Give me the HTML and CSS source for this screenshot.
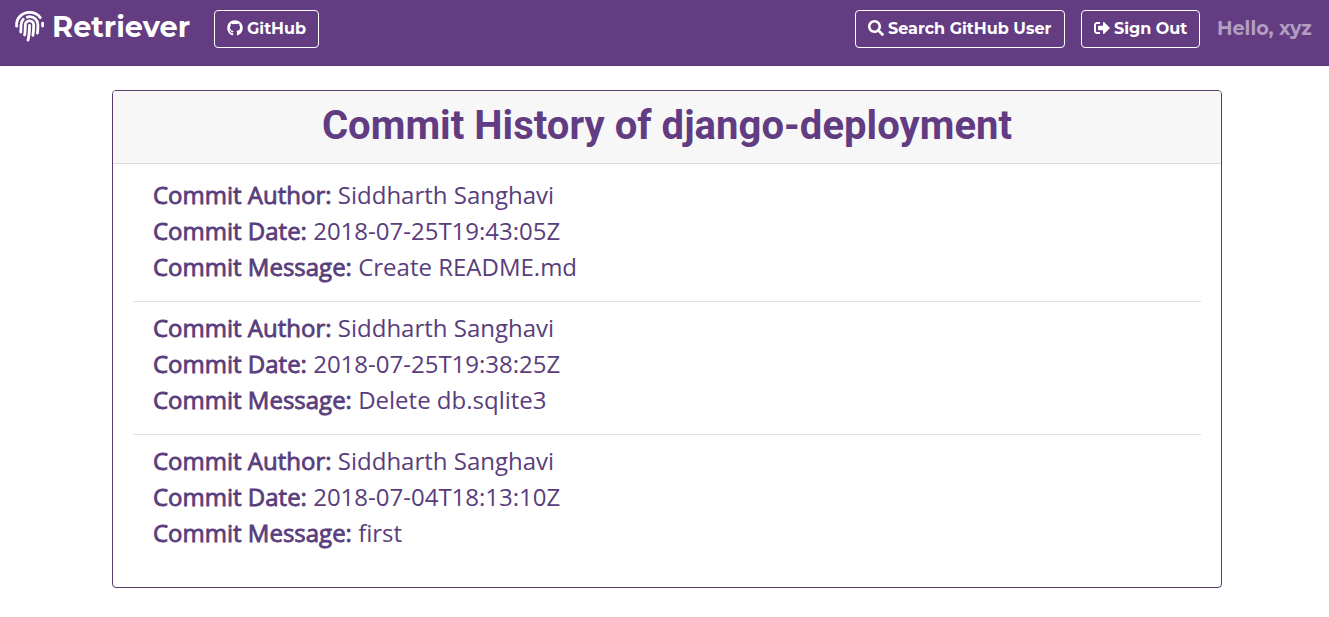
FILE: index.html
```html
<!DOCTYPE html>
<html lang="en">
<head>
<meta charset="utf-8">
<title>Retriever</title>
<link rel="stylesheet" href="styles.css">
</head>
<body>
<nav class="navbar">
  <a class="brand"><svg class="brand-icon" viewBox="0 0 30 31" aria-hidden="true"><g fill="none" stroke="currentColor" stroke-width="2.8" stroke-linecap="round"><path d="M1.6 15.2v-1.5C1.6 6.6 7.500 1.400 14.500 1.400c4.600 0 8.500 2 10.800 5.200M27.600 12.200v2.800"/><path d="M5.700 21c.3-2 .3-4 .3-7 0-2.300.9-4.200 2.300-5.700M12.200 6.100c.8-.3 1.600-.4 2.500-.4 4.600 0 8.200 3.400 8.200 8 0 3 0 5.500-.5 8.300"/><path d="M9.600 24c.7-3 .7-6.500.7-10 0-2.300 1.900-4.100 4.200-4.100s4.200 1.800 4.200 4.100c0 4-.2 7-.8 10.300"/><path d="M14.500 14.300c0 5.500-.2 10-1.500 14.800"/></g></svg><span class="brand-name">Retriever</span></a>
  <a class="btn github"><svg class="icon" viewBox="0 0 496 512" aria-hidden="true"><path fill="currentColor" d="M165.900 397.400c0 2-2.300 3.600-5.200 3.600-3.300.3-5.600-1.300-5.600-3.600 0-2 2.300-3.600 5.200-3.600 3-.3 5.600 1.300 5.600 3.600zM244.800 8C106.100 8 0 113.300 0 252c0 110.900 69.800 205.800 169.500 239.200 12.800 2.300 17.300-5.600 17.300-12.100 0-6.200-.3-40.400-.3-61.400 0 0-70 15-84.700-29.800 0 0-11.400-29.100-27.800-36.600 0 0-22.900-15.700 1.600-15.400 0 0 24.900 2 38.600 25.800 21.900 38.600 58.600 27.500 72.900 20.900 2.300-16 8.800-27.100 16-33.700-55.900-6.200-112.300-14.300-112.300-110.500 0-27.500 7.600-41.300 23.600-58.900-2.600-6.500-11.100-33.300 2.600-67.900 20.900-6.500 69 27 69 27 20-5.600 41.500-8.500 62.800-8.500s42.800 2.900 62.800 8.500c0 0 48.100-33.600 69-27 13.700 34.700 5.200 61.400 2.600 67.900 16 17.700 25.800 31.500 25.800 58.900 0 96.500-58.900 104.200-114.800 110.500 9.200 7.900 17 22.900 17 46.400 0 33.700-.3 75.400-.3 83.600 0 6.500 4.600 14.400 17.300 12.100C428.200 457.800 496 362.900 496 252 496 113.300 383.500 8 244.800 8z"/></svg><span>GitHub</span></a>
  <div class="nav-right">
    <a class="btn search"><svg class="icon" viewBox="0 0 512 512" aria-hidden="true"><path fill="currentColor" d="M505 442.700L405.300 343c-4.500-4.500-10.600-7-17-7H372c27.600-35.300 44-79.700 44-128C416 93.100 322.900 0 208 0S0 93.100 0 208s93.100 208 208 208c48.300 0 92.700-16.400 128-44v16.300c0 6.400 2.500 12.500 7 17l99.700 99.700c9.400 9.400 24.600 9.400 33.900 0l28.300-28.300c9.400-9.400 9.400-24.600.1-34zM208 336c-70.700 0-128-57.200-128-128 0-70.700 57.200-128 128-128 70.700 0 128 57.200 128 128 0 70.700-57.200 128-128 128z"/></svg><span>Search GitHub User</span></a>
    <a class="btn signout"><svg class="icon" viewBox="0 0 512 512" aria-hidden="true"><path fill="currentColor" d="M497 273L329 441c-15 15-41 4.500-41-17v-96H152c-13.300 0-24-10.700-24-24v-96c0-13.300 10.700-24 24-24h136V88c0-21.400 25.900-32 41-17l168 168c9.300 9.400 9.300 24.600 0 34zM192 436v-40c0-6.600-5.400-12-12-12H96c-17.700 0-32-14.300-32-32V160c0-17.700 14.300-32 32-32h84c6.600 0 12-5.400 12-12V76c0-6.600-5.400-12-12-12H96c-53 0-96 43-96 96v192c0 53 43 96 96 96h84c6.600 0 12-5.400 12-12z"/></svg><span>Sign Out</span></a>
    <span class="hello">Hello, xyz</span>
  </div>
</nav>
<main class="card">
  <h1 class="card-header">Commit History of django-deployment</h1>
  <ul class="commits">
    <li class="commit">
      <p><b>Commit Author:</b> <span>Siddharth Sanghavi</span></p>
      <p><b>Commit Date:</b> <span>2018-07-25T19:43:05Z</span></p>
      <p><b>Commit Message:</b> <span>Create README.md</span></p>
    </li>
    <li class="commit">
      <p><b>Commit Author:</b> <span>Siddharth Sanghavi</span></p>
      <p><b>Commit Date:</b> <span>2018-07-25T19:38:25Z</span></p>
      <p><b>Commit Message:</b> <span>Delete db.sqlite3</span></p>
    </li>
    <li class="commit">
      <p><b>Commit Author:</b> <span>Siddharth Sanghavi</span></p>
      <p><b>Commit Date:</b> <span>2018-07-04T18:13:10Z</span></p>
      <p><b>Commit Message:</b> <span>first</span></p>
    </li>
  </ul>
</main>
</body>
</html>
```
FILE: styles.css
```css
* { box-sizing: border-box; }
body { margin: 0; background: #fff; color: #593d7c; font-family: "Open Sans", sans-serif; }
.navbar { height: 66px; padding: 10px 17px 0 15px; display: flex; align-items: flex-start; background: #643c82; border-bottom: 1px solid #593775; color: #fff; font-family: Montserrat, Inter, sans-serif; font-weight: 700; white-space: nowrap; }
.brand { display: flex; width: 199px; height: 38px; }
.brand-icon { width: 30px; height: 31px; margin-top: 1px; flex: none; }
.brand-name { margin-left: 7px; font-size: 28.8px; line-height: 34px; }
.btn { height: 38px; display: flex; align-items: center; border: 1px solid #fff; border-radius: 4px; padding: 0 0 2px 12px; gap: 4px; font-size: 16px; }
.icon { width: 16px; height: 16px; flex: none; }
.github { width: 105px; }
.nav-right { margin-left: auto; display: flex; }
.search { width: 210px; margin-right: 16px; }
.signout { width: 119px; }
.hello { width: 95px; margin-left: 17px; font-size: 19.2px; line-height: 36px; color: #b29ec1; }
.card { width: 1110px; height: 498px; margin: 24px 0 0 112px; border: 1px solid #563d6c; border-radius: 4px; overflow: hidden; }
.card-header { height: 73px; margin: 0; padding-top: 11px; background: #f7f7f7; border-bottom: 1px solid #dcdcdc; text-align: center; font: 700 40px/48px Roboto, sans-serif; letter-spacing: 0.04px; color: #613c83; }
.commits { list-style: none; margin: 0; padding: 0 20px; }
.commit { height: 133px; padding: 8px 20px 0; font-size: 24px; line-height: 36px; font-weight: 400; }
.commit:first-child { height: 138px; padding-top: 13px; }
.commit:not(:last-child) { border-bottom: 1px solid #e0e0e0; }
.commit p { margin: 0; }
.commit b { font-weight: 400; -webkit-text-stroke: 0.8px currentColor; }
```
